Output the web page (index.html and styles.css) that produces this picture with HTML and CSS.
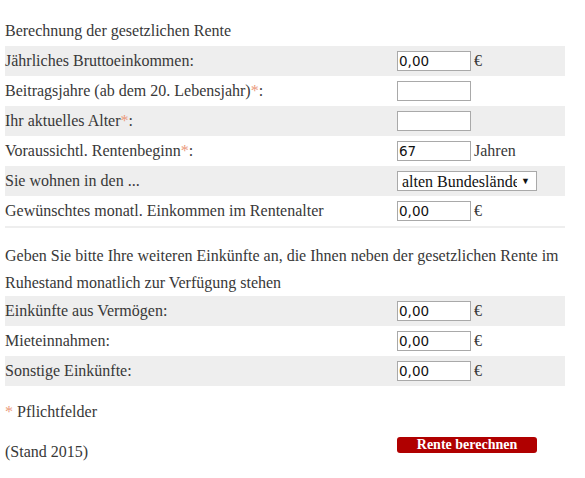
FILE: index.html
```html
<!DOCTYPE html>
<html lang="de">
<head>
<meta charset="utf-8">
<title>Rentenrechner</title>
<link rel="stylesheet" href="styles.css">
</head>
<body>
<div class="calc">
  <div class="title">Berechnung der gesetzlichen Rente</div>
  <div class="rows rows-main">
    <div class="row shade">
      <span class="label">Jährliches Bruttoeinkommen:</span>
      <span class="field"><input class="num" type="text" value="0,00"><span class="unit">€</span></span>
    </div>
    <div class="row">
      <span class="label">Beitragsjahre (ab dem 20. Lebensjahr)<span class="req">*</span>:</span>
      <span class="field"><input class="num" type="text" value=""></span>
    </div>
    <div class="row shade">
      <span class="label">Ihr aktuelles Alter<span class="req">*</span>:</span>
      <span class="field"><input class="num" type="text" value=""></span>
    </div>
    <div class="row">
      <span class="label">Voraussichtl. Rentenbeginn<span class="req">*</span>:</span>
      <span class="field"><input class="num" type="text" value="67"><span class="unit">Jahren</span></span>
    </div>
    <div class="row shade">
      <span class="label">Sie wohnen in den ...</span>
      <span class="field"><span class="select-wrap"><select class="sel"><option>alten Bundesländern</option><option>neuen Bundesländern</option></select><span class="arrow">▼</span></span></span>
    </div>
    <div class="row">
      <span class="label">Gewünschtes monatl. Einkommen im Rentenalter</span>
      <span class="field"><input class="num" type="text" value="0,00"><span class="unit">€</span></span>
    </div>
  </div>
  <p class="intro">Geben Sie bitte Ihre weiteren Einkünfte an, die Ihnen neben der gesetzlichen Rente im<br>Ruhestand monatlich zur Verfügung stehen</p>
  <div class="rows">
    <div class="row shade">
      <span class="label">Einkünfte aus Vermögen:</span>
      <span class="field"><input class="num" type="text" value="0,00"><span class="unit">€</span></span>
    </div>
    <div class="row">
      <span class="label">Mieteinnahmen:</span>
      <span class="field"><input class="num" type="text" value="0,00"><span class="unit">€</span></span>
    </div>
    <div class="row shade">
      <span class="label">Sonstige Einkünfte:</span>
      <span class="field"><input class="num" type="text" value="0,00"><span class="unit">€</span></span>
    </div>
  </div>
  <div class="note"><span class="req">*</span> Pflichtfelder</div>
  <div class="footer">
    <span class="label">(Stand 2015)</span>
    <button class="submit" type="button">Rente berechnen</button>
  </div>
</div>
</body>
</html>
```
FILE: styles.css
```css
* { box-sizing: border-box; }
html, body { margin: 0; padding: 0; background: #fff; }
body {
  font-family: "Liberation Serif", "DejaVu Serif", serif;
  font-size: 16px;
  color: #383838;
}
.calc {
  width: 565px;
  padding: 16px 0 0 5px;
}
.title { line-height: 30px; height: 30px; }
.rows-main { border-bottom: 2px solid #eeeeee; }
.row {
  display: grid;
  grid-template-columns: 392px 1fr;
  align-items: center;
  height: 30px;
}
.row.shade { background: #eeeeee; }
.label { line-height: 30px; white-space: nowrap; }
.req { color: #eb9a7c; }
.field { display: flex; align-items: center; }
.num {
  width: 74px;
  height: 20px;
  margin: 0;
  padding: 0 1px;
  border: 1px solid #a9a9a9;
  background: #fff;
  font-family: "DejaVu Sans", Verdana, sans-serif;
  font-size: 13.5px;
  color: #111;
}
.unit { margin-left: 3px; }
.select-wrap { position: relative; display: inline-block; }
.sel {
  -webkit-appearance: none;
  appearance: none;
  width: 140px;
  height: 20px;
  margin: 0;
  padding: 0 19px 0 4px;
  border: 1px solid #a9a9a9;
  border-radius: 0;
  background: #fff;
  font-family: "Liberation Serif", "DejaVu Serif", serif;
  font-size: 16px;
  color: #111;
}
.arrow {
  position: absolute;
  right: 7px;
  top: 5px;
  font-size: 9px;
  line-height: 10px;
  color: #111;
  pointer-events: none;
}
.intro {
  margin: 14px 0 0 0;
  line-height: 27px;
  white-space: nowrap;
}
.note { margin-top: 11px; line-height: 30px; }
.footer {
  display: grid;
  grid-template-columns: 392px 140px;
  align-items: start;
  margin-top: 10px;
  height: 30px;
}
.submit {
  margin-top: 0;
  width: 140px;
  height: 16px;
  padding: 0;
  border: 0;
  border-radius: 3px;
  background: #b00000;
  color: #fff;
  font-family: "Liberation Serif", "DejaVu Serif", serif;
  font-weight: bold;
  font-size: 14px;
  line-height: 16px;
}
```
